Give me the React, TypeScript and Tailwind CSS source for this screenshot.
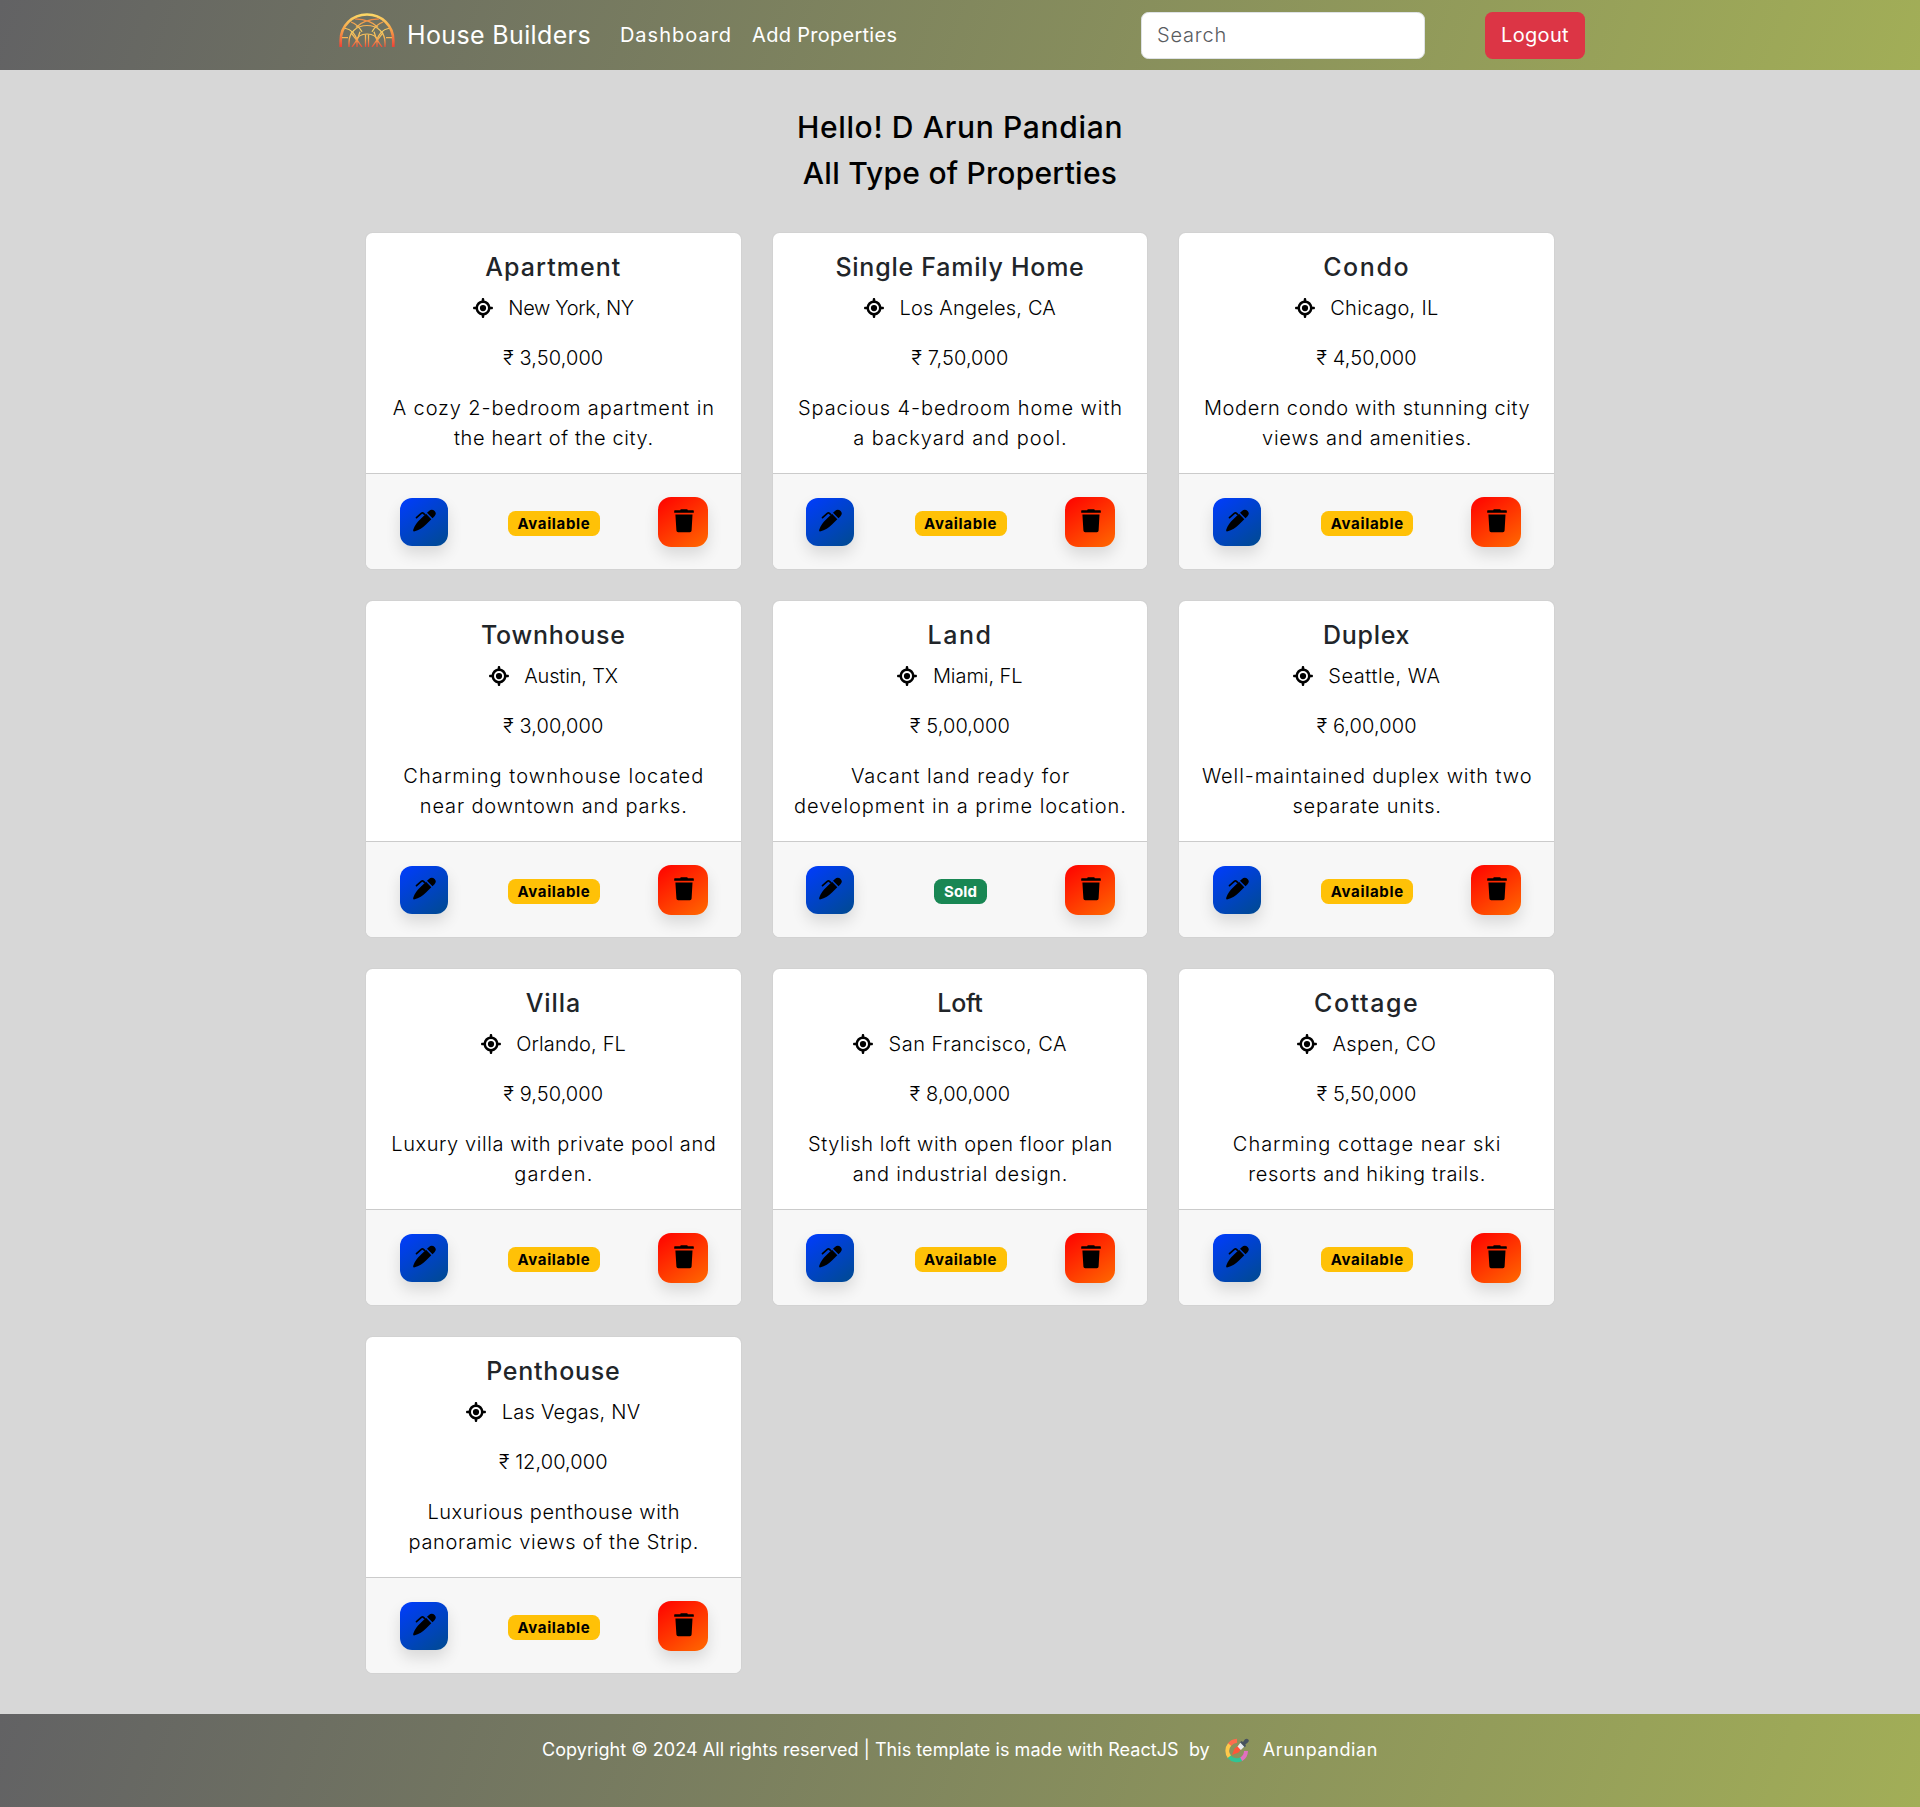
import { FaLocationCrosshairs } from "react-icons/fa6";

type Line = [text: string, tracking: string];

interface Property {
  title: Line;
  location: Line;
  price: string;
  description: Line[];
  sold?: boolean;
}

const properties: Property[] = [
  {
    title: ["Apartment", "tracking-[1.04px]"],
    location: ["New York, NY", "tracking-[-0.35px]"],
    price: "3,50,000",
    description: [
      ["A cozy 2-bedroom apartment in", "tracking-[0.88px]"],
      ["the heart of the city.", "tracking-[0.62px]"],
    ],
  },
  {
    title: ["Single Family Home", "tracking-[0.75px]"],
    location: ["Los Angeles, CA", "tracking-[0.2px]"],
    price: "7,50,000",
    description: [
      ["Spacious 4-bedroom home with", "tracking-[0.92px]"],
      ["a backyard and pool.", "tracking-[1px]"],
    ],
  },
  {
    title: ["Condo", "tracking-[1.6px]"],
    location: ["Chicago, IL", "tracking-[0.3px]"],
    price: "4,50,000",
    description: [
      ["Modern condo with stunning city", "tracking-[0.66px]"],
      ["views and amenities.", "tracking-[0.8px]"],
    ],
  },
  {
    title: ["Townhouse", "tracking-[0.75px]"],
    location: ["Austin, TX", "tracking-[-0.15px]"],
    price: "3,00,000",
    description: [
      ["Charming townhouse located", "tracking-[1.08px]"],
      ["near downtown and parks.", "tracking-[0.85px]"],
    ],
  },
  {
    title: ["Land", "tracking-[1.5px]"],
    location: ["Miami, FL", "tracking-[-0.05px]"],
    price: "5,00,000",
    description: [
      ["Vacant land ready for", "tracking-[1px]"],
      ["development in a prime location.", "tracking-[0.94px]"],
    ],
    sold: true,
  },
  {
    title: ["Duplex", "tracking-[0.7px]"],
    location: ["Seattle, WA", "tracking-[0.58px]"],
    price: "6,00,000",
    description: [
      ["Well-maintained duplex with two", "tracking-[0.91px]"],
      ["separate units.", "tracking-[0.88px]"],
    ],
  },
  {
    title: ["Villa", "tracking-[0.9px]"],
    location: ["Orlando, FL", "tracking-[0.15px]"],
    price: "9,50,000",
    description: [
      ["Luxury villa with private pool and", "tracking-[0.57px]"],
      ["garden.", "tracking-[1.2px]"],
    ],
  },
  {
    title: ["Loft", "tracking-[-0.27px]"],
    location: ["San Francisco, CA", "tracking-[0.48px]"],
    price: "8,00,000",
    description: [
      ["Stylish loft with open floor plan", "tracking-[0.55px]"],
      ["and industrial design.", "tracking-[0.78px]"],
    ],
  },
  {
    title: ["Cottage", "tracking-[1.55px]"],
    location: ["Aspen, CO", "tracking-[0.4px]"],
    price: "5,50,000",
    description: [
      ["Charming cottage near ski", "tracking-[0.98px]"],
      ["resorts and hiking trails.", "tracking-[0.65px]"],
    ],
  },
  {
    title: ["Penthouse", "tracking-[0.75px]"],
    location: ["Las Vegas, NV", "tracking-[0.25px]"],
    price: "12,00,000",
    description: [
      ["Luxurious penthouse with", "tracking-[0.52px]"],
      ["panoramic views of the Strip.", "tracking-[0.68px]"],
    ],
  },
];

function Logo() {
  return (
    <svg className="h-[34px] w-[56px]" viewBox="0 0 56 38" preserveAspectRatio="none" fill="none">
      <defs>
        <linearGradient id="dome" gradientUnits="userSpaceOnUse" x1="0" y1="0" x2="0" y2="38">
          <stop offset="0" stopColor="#fddc68" />
          <stop offset="0.5" stopColor="#f7a048" />
          <stop offset="1" stopColor="#ee4036" />
        </linearGradient>
        <linearGradient id="rib" gradientUnits="userSpaceOnUse" x1="0" y1="4" x2="0" y2="38">
          <stop offset="0" stopColor="#ee7a3c" />
          <stop offset="0.45" stopColor="#f8cf62" />
          <stop offset="0.7" stopColor="#f5b455" />
          <stop offset="1" stopColor="#ee4a38" />
        </linearGradient>
      </defs>
      <path d="M1.7 38V31C1.7 14 13.500 1.700 28 1.700S54.300 14 54.300 31V38" stroke="url(#dome)" strokeWidth="2.700" />
      <g stroke="url(#rib)" strokeWidth="1.300">
        <path d="M10 38V33C10 22 17 14 28 14S46 22 46 33V38" />
        <path d="M17 32C18 27 22 23.500 28 23.500S38 27 39 32" />
        <path d="M16 6.500C26 7 34 10 39 16M40 6.500C30 7 22 10 17 16" />
        <path d="M12 10C17 12 20 15 23 21M44 10C39 12 36 15 33 21" />
        <path d="M6 17C12 18 17 24 18 31M50 17C44 18 39 24 38 31" />
        <path d="M3 27.500H9M53 27.500H47" />
        <path d="M12 22L18 31L21 21M44 22L38 31L35 21" />
        <path d="M18 27V38M18 30L13 38M18 30L23 38M38 27V38M38 30L33 38M38 30L43 38M26.500 24V38M29.500 24V38" />
      </g>
    </svg>
  );
}

function DesignerMark() {
  return (
    <svg className="h-[25px] w-[25px]" viewBox="0 0 25 25" fill="none">
      <g strokeWidth="4">
        <path d="M13 2.800A10 10 0 0 0 5.400 6.800" stroke="#ff6d4d" />
        <path d="M5.600 6.500A10 10 0 0 0 5.500 19" stroke="#ffc94a" />
        <path d="M5.300 18.700A9.600 9.600 0 0 0 17.500 21" stroke="#2fc595" />
        <path d="M17.200 21.200A9.600 9.600 0 0 0 22 13" stroke="#e26fc0" />
      </g>
      <path d="M8 17L10.500 10.500L15 7L18 10L14.500 14.500Z" fill="#ff5638" />
      <path d="M13.500 8.500L17 4L21 8L16.800 12Z" fill="#e8edf0" />
      <path d="M16 4.200L17.500 3L19 4L21 1.200Q23 0 24.300 1.500T23.800 4.500L21.300 6.500L22 8L20.700 9.200Z" fill="#47535f" />
    </svg>
  );
}

function PenIcon() {
  return (
    <svg className="h-6 w-6" viewBox="0 0 24 24">
      <path d="M2 22.400C1 22.400 1 21.400 1.400 20.300C2.800 16.500 5 13.400 8.300 10.300L14 4.800L19.300 10.200L14 15.400C10.800 18.600 7.200 21 2 22.400Z" />
      <path d="M15 3.800L17 1.900C18.800.200 21 .400 22.600 2S24.200 5.500 22.500 7.200L20.500 9.200Z" />
      <path d="M4.500 8.700L9.300 4.300C10 3.700 10.900 3.700 11.500 4.300L12.300 5.100" fill="none" stroke="black" strokeWidth="1.700" strokeLinecap="round" />
    </svg>
  );
}

function TrashIcon() {
  return (
    <svg className="h-6 w-5" viewBox="0 0 20 24">
      <path d="M6.200 1.300Q6.200.300 7.200.300H12.800Q13.800.300 13.800 1.300H19.200Q19.800 1.300 19.800 2V3.800H.200V2Q.200 1.300.800 1.300Z" />
      <path d="M1.400 5.400H18.500L17.600 21.400Q17.500 23.200 15.800 23.200H4.200Q2.500 23.200 2.400 21.400Z" />
    </svg>
  );
}

function PropertyCard({ title, location, price, description, sold }: Property) {
  return (
    <article className="flex h-[338px] flex-col rounded-[7.5px] border border-black/[0.175] bg-white bg-clip-border text-center text-black">
      <div className="flex h-[240px] flex-col px-5 pt-[19px] pb-5">
        <h2 className={`mb-[11px] text-[25px] leading-[30px] font-medium text-[#212529] ${title[1]}`}>{title[0]}</h2>
        <p className="mb-5 flex h-[30px] items-center justify-center">
          <FaLocationCrosshairs className="mr-[15.5px] size-5" />
          <span className={location[1]}>{location[0]}</span>
        </p>
        <p className="mb-5 leading-[30px] tracking-[0.1px]">₹ {price}</p>
        <p className="-mx-3">
          {description.map(([text, tracking]) => (
            <span key={text} className={`block pl-px leading-[30px] whitespace-nowrap ${tracking}`}>
              {text}
            </span>
          ))}
        </p>
      </div>
      <footer className="grid flex-1 grid-cols-[1fr_auto_1fr] items-center rounded-b-[6.5px] border-t border-black/[0.175] bg-[#f7f7f7] pr-[32.5px] pl-[33.7px]">
        <button className="flex size-12 justify-center justify-self-start rounded-xl bg-linear-[145deg] from-[#003cff] to-[#004a8f] pt-[11px] shadow-[0_8px_15px_rgba(0,0,0,0.12)]">
          <PenIcon />
        </button>
        {sold ? (
          <span className="mt-1 rounded-[7.5px] bg-[#198754] px-[9.5px] py-[5px] text-[15px] leading-[15px] font-bold tracking-[0.2px] text-white">Sold</span>
        ) : (
          <span className="mt-1 rounded-[7.5px] bg-[#ffc107] px-[9.5px] py-[5px] text-[15px] leading-[15px] font-bold tracking-[0.66px]">Available</span>
        )}
        <button className="flex size-[50px] justify-center justify-self-end rounded-[13px] bg-linear-[145deg] from-[#ff0000] to-[#ff6a00] pt-[12px] pl-[1.500px] shadow-[0_8px_15px_rgba(0,0,0,0.12)]">
          <TrashIcon />
        </button>
      </footer>
    </article>
  );
}

export default function App() {
  return (
    <div className="flex h-[1807px] flex-col bg-[#d7d7d7] font-['Inter',sans-serif] text-[20px] leading-[30px] font-light">
      <header className="flex h-[70px] justify-center bg-linear-[109.6deg] from-[#626264] to-[#a2ae57] font-normal text-white">
        <nav className="flex w-[1250px] items-center">
          <a className="mt-[-10px] mr-3 ml-1">
            <Logo />
          </a>
          <span className="mr-[29px] text-[25px] tracking-[0.36px]">House Builders</span>
          <span className="mr-5 tracking-[1px]">Dashboard</span>
          <span className="tracking-[0.28px]">Add Properties</span>
          <input
            className="ml-auto h-[47px] w-[284px] rounded-[7.5px] border border-[#dee2e6] bg-white px-[15px] font-light tracking-[0.8px] text-black placeholder:text-[#595c5f]"
            placeholder="Search"
          />
          <button className="ml-[60px] h-[47px] w-[100px] rounded-[7.5px] bg-[#dc3545] tracking-[0.32px]">Logout</button>
        </nav>
      </header>

      <main className="flex flex-1 flex-col items-center">
        <h1 className="mt-[39px] text-[30px] leading-9 font-medium tracking-[0.66px] text-black">Hello! D Arun Pandian</h1>
        <h1 className="mt-[10px] text-[30px] leading-9 font-medium tracking-[0.23px] text-black">All Type of Properties</h1>
        <section className="mt-[41px] grid w-[1190px] grid-cols-3 gap-[30px]">
          {properties.map((property) => (
            <PropertyCard key={property.title[0]} {...property} />
          ))}
        </section>
      </main>

      <footer className="flex h-[93px] items-start justify-center bg-linear-[109.6deg] from-[#626264] to-[#a2ae57] pt-[21px] text-[18px] font-normal text-white">
        <span className="tracking-[0.05px] whitespace-pre">Copyright © 2024 All rights reserved | This template is made with ReactJS  by</span>
        <span className="mt-[3px] mr-[14px] ml-[14px]">
          <DesignerMark />
        </span>
        <span className="tracking-[0.61px]">Arunpandian</span>
      </footer>
    </div>
  );
}
